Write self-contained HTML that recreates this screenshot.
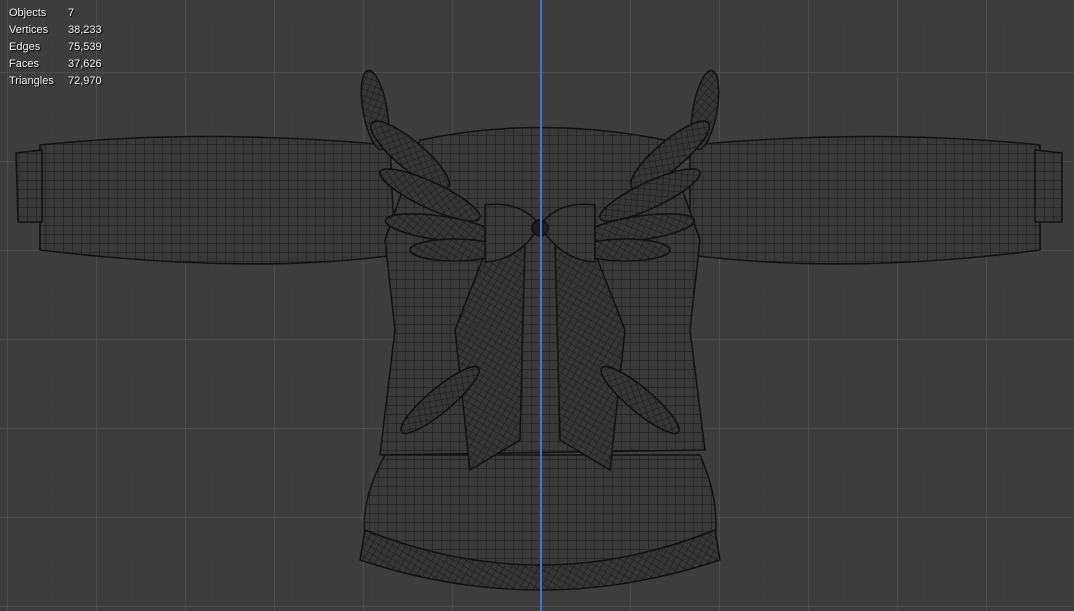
<!DOCTYPE html>
<html><head><meta charset="utf-8"><style>
html,body{margin:0;padding:0;width:1074px;height:611px;overflow:hidden;background:#3d3d3d}
.stats{position:absolute;left:9px;top:5px;font:11px/17px "Liberation Sans",sans-serif;color:#f0f0f0;text-shadow:1px 1px 1px #000}
.stats span{display:inline-block;width:59px}
</style></head><body>
<svg width="1074" height="611" style="position:absolute;left:0;top:0">
<defs>
<pattern id="minor" x="7" y="-17" width="8.9" height="8.9" patternUnits="userSpaceOnUse">
<path d="M0 0V8.9M0 0H8.9" stroke="#404040" stroke-width="1"/></pattern>
<pattern id="major" x="7" y="-17" width="89" height="89" patternUnits="userSpaceOnUse">
<path d="M0.5 0V89M0 0.5H89" stroke="#4d4d4d" stroke-width="1"/></pattern>
<pattern id="mesh" width="9" height="9" patternUnits="userSpaceOnUse">
<rect width="9" height="9" fill="#393939"/>
<path d="M0 0V9M0 0H9" stroke="#1a1a1a" stroke-width="1"/></pattern>
<pattern id="mesh2" width="6" height="6" patternUnits="userSpaceOnUse" patternTransform="rotate(30)">
<rect width="6" height="6" fill="#363636"/>
<path d="M0 0V6M0 0H6" stroke="#1a1a1a" stroke-width="1"/></pattern>
</defs>
<rect width="1074" height="611" fill="url(#minor)"/>
<rect width="1074" height="611" fill="url(#major)"/>
<g stroke="#121212" stroke-width="1.5">
<path d="M40 145 Q200 128 390 145 L395 255 Q250 275 40 250 Z" fill="url(#mesh)"/>
<path d="M16 153 L42 150 L42 222 L18 222 Z" fill="url(#mesh)"/>
<path d="M690 145 Q880 128 1040 145 L1040 250 Q850 275 690 255 Z" fill="url(#mesh)"/>
<path d="M1035 150 L1062 153 L1062 222 L1035 222 Z" fill="url(#mesh)"/>
<path d="M420 140 Q540 115 665 140 L700 240 L690 330 L705 450 L380 455 L395 330 L385 240 Z" fill="url(#mesh)"/>
<path d="M385 455 L700 455 Q720 500 715 540 Q540 610 365 540 Q360 500 385 455 Z" fill="url(#mesh)"/>
<path d="M365 530 Q540 600 715 530 L720 560 Q540 620 360 560 Z" fill="url(#mesh2)"/>
<path d="M490 240 L525 240 L520 440 L470 470 L455 330 Z" fill="url(#mesh2)"/>
<path d="M555 240 L590 240 L625 330 L610 470 L560 440 Z" fill="url(#mesh2)"/>
<ellipse cx="375" cy="110" rx="12" ry="40" transform="rotate(-10 375 110)" fill="url(#mesh2)"/>
<ellipse cx="410" cy="155" rx="50" ry="14" transform="rotate(40 410 155)" fill="url(#mesh2)"/>
<ellipse cx="430" cy="195" rx="55" ry="13" transform="rotate(25 430 195)" fill="url(#mesh2)"/>
<ellipse cx="440" cy="228" rx="55" ry="12" transform="rotate(8 440 228)" fill="url(#mesh2)"/>
<ellipse cx="455" cy="250" rx="45" ry="11" fill="url(#mesh2)"/>
<ellipse cx="705" cy="110" rx="12" ry="40" transform="rotate(10 705 110)" fill="url(#mesh2)"/>
<ellipse cx="670" cy="155" rx="50" ry="14" transform="rotate(-40 670 155)" fill="url(#mesh2)"/>
<ellipse cx="650" cy="195" rx="55" ry="13" transform="rotate(-25 650 195)" fill="url(#mesh2)"/>
<ellipse cx="640" cy="228" rx="55" ry="12" transform="rotate(-8 640 228)" fill="url(#mesh2)"/>
<ellipse cx="625" cy="250" rx="45" ry="11" fill="url(#mesh2)"/>
<ellipse cx="440" cy="400" rx="50" ry="12" transform="rotate(-40 440 400)" fill="url(#mesh2)"/>
<ellipse cx="640" cy="400" rx="50" ry="12" transform="rotate(40 640 400)" fill="url(#mesh2)"/>
<path d="M485 205 Q520 200 540 225 Q520 260 485 262 Z" fill="url(#mesh)"/>
<path d="M595 205 Q560 200 540 225 Q560 260 595 262 Z" fill="url(#mesh)"/>
<circle cx="540" cy="228" r="8" fill="#1e1e1e"/>
</g>
<rect x="540" y="0" width="2" height="611" fill="#3b78cc"/>
</svg>
<div class="stats">
<div><span>Objects</span>7</div>
<div><span>Vertices</span>38,233</div>
<div><span>Edges</span>75,539</div>
<div><span>Faces</span>37,626</div>
<div><span>Triangles</span>72,970</div>
</div>
</body></html>
